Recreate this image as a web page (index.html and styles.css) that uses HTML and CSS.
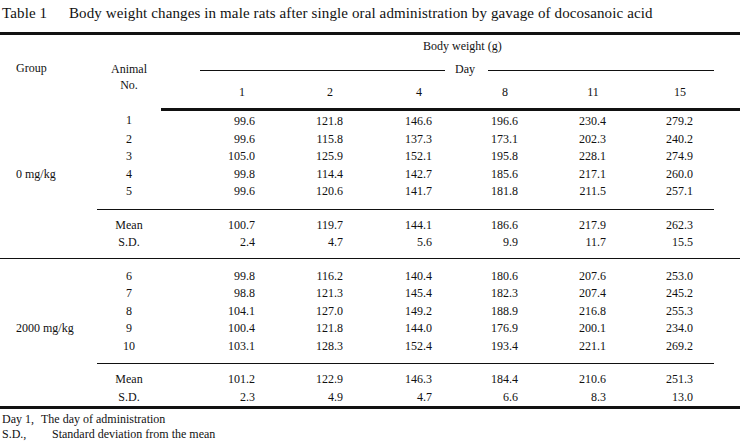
FILE: index.html
```html
<!DOCTYPE html>
<html>
<head>
<meta charset="utf-8">
<link rel="stylesheet" href="styles.css">
</head>
<body>
<div class="caption"><span class="cap-label">Table 1</span><span class="cap-text">Body weight changes in male rats after single oral administration by gavage of docosanoic acid</span></div>
<table class="bw">
<colgroup>
<col class="c-group"><col class="c-animal"><col class="c-d1"><col class="c-d2"><col class="c-d3"><col class="c-d4"><col class="c-d5"><col class="c-d6"><col class="c-pad">
</colgroup>
<thead>
<tr class="h1"><th rowspan="3" class="grp-h">Group</th><th rowspan="3" class="ani-h">Animal<br>No.</th><th colspan="6" class="bw-h">Body weight (g)</th><th></th></tr>
<tr class="h2"><th colspan="6" class="day-h"><div class="day-line"><span class="rule-l"></span><span class="day-t">Day</span><span class="rule-r"></span></div></th><th></th></tr>
<tr class="h3"><th class="dn"><span>1</span></th><th class="dn"><span>2</span></th><th class="dn"><span>4</span></th><th class="dn"><span>8</span></th><th class="dn"><span>11</span></th><th class="dn"><span>15</span></th><th></th></tr>
</thead>
<tbody class="grp">
<tr class="first"><td></td><td class="an">1</td><td>99.6</td><td>121.8</td><td>146.6</td><td>196.6</td><td>230.4</td><td>279.2</td><td></td></tr>
<tr><td></td><td class="an">2</td><td>99.6</td><td>115.8</td><td>137.3</td><td>173.1</td><td>202.3</td><td>240.2</td><td></td></tr>
<tr><td></td><td class="an">3</td><td>105.0</td><td>125.9</td><td>152.1</td><td>195.8</td><td>228.1</td><td>274.9</td><td></td></tr>
<tr><td class="gl">0 mg/kg</td><td class="an">4</td><td>99.8</td><td>114.4</td><td>142.7</td><td>185.6</td><td>217.1</td><td>260.0</td><td></td></tr>
<tr class="last"><td></td><td class="an">5</td><td>99.6</td><td>120.6</td><td>141.7</td><td>181.8</td><td>211.5</td><td>257.1</td><td></td></tr>
<tr class="mean"><td></td><td class="an">Mean</td><td>100.7</td><td>119.7</td><td>144.1</td><td>186.6</td><td>217.9</td><td>262.3</td><td class="nb"></td></tr>
<tr class="sd"><td></td><td class="an">S.D.</td><td>2.4</td><td>4.7</td><td>5.6</td><td>9.9</td><td>11.7</td><td>15.5</td><td></td></tr>
</tbody>
<tbody class="grp grp2">
<tr class="first"><td></td><td class="an">6</td><td>99.8</td><td>116.2</td><td>140.4</td><td>180.6</td><td>207.6</td><td>253.0</td><td></td></tr>
<tr><td></td><td class="an">7</td><td>98.8</td><td>121.3</td><td>145.4</td><td>182.3</td><td>207.4</td><td>245.2</td><td></td></tr>
<tr><td></td><td class="an">8</td><td>104.1</td><td>127.0</td><td>149.2</td><td>188.9</td><td>216.8</td><td>255.3</td><td></td></tr>
<tr><td class="gl">2000 mg/kg</td><td class="an">9</td><td>100.4</td><td>121.8</td><td>144.0</td><td>176.9</td><td>200.1</td><td>234.0</td><td></td></tr>
<tr class="last"><td></td><td class="an">10</td><td>103.1</td><td>128.3</td><td>152.4</td><td>193.4</td><td>221.1</td><td>269.2</td><td></td></tr>
<tr class="mean"><td></td><td class="an">Mean</td><td>101.2</td><td>122.9</td><td>146.3</td><td>184.4</td><td>210.6</td><td>251.3</td><td class="nb"></td></tr>
<tr class="sd"><td></td><td class="an">S.D.</td><td>2.3</td><td>4.9</td><td>4.7</td><td>6.6</td><td>8.3</td><td>13.0</td><td></td></tr>
</tbody>
</table>
<div class="notes">
<div class="note"><span class="n1">Day 1,</span><span>The day of administration</span></div>
<div class="note"><span class="n2">S.D.,</span><span>Standard deviation from the mean</span></div>
</div>
</body>
</html>
```
FILE: styles.css
```css
html, body {
  margin: 0;
  padding: 0;
  background: #fff;
}
body {
  width: 740px;
  font-family: "Liberation Serif", "DejaVu Serif", serif;
  font-size: 12px;
  color: #111;
}
.caption {
  display: flex;
  height: 26px;
  align-items: center;
  font-size: 15px;
  letter-spacing: 0.12px;
  padding-left: 2px;
  padding-bottom: 6px;
}
.cap-label {
  width: 67px;
}
.bw {
  width: 740px;
  border-collapse: collapse;
  table-layout: fixed;
  border-top: 3px solid #111;
  border-bottom: 3px solid #111;
}
.c-group { width: 97px; }
.c-animal { width: 64px; }
.c-d1 { width: 115px; }
.c-d2 { width: 88px; }
.c-d3 { width: 89px; }
.c-d4 { width: 86px; }
.c-d5 { width: 88px; }
.c-d6 { width: 87px; }
.c-pad { width: 26px; }
th, td {
  padding: 0;
  font-weight: 400;
  line-height: 17.5px;
  white-space: nowrap;
}
thead tr.h3 th {
  border-bottom: 3px solid #111;
}
.grp-h {
  text-align: left;
  padding-left: 16px;
  vertical-align: top;
  padding-top: 25px;
}
.ani-h {
  text-align: center;
  line-height: 16px;
  vertical-align: top;
  padding-top: 26px;
}
.bw-h {
  text-align: left;
  padding-left: 262px;
  padding-top: 3px;
  height: 18px;
}
.day-line {
  display: flex;
  align-items: center;
  height: 28px;
  padding-left: 39px;
}
.rule-l {
  width: 245px;
  border-top: 1px solid #111;
}
.rule-r {
  flex: 1;
  border-top: 1px solid #111;
}
.day-t {
  padding: 0 13px 0 10px;
}
th.dn {
  text-align: right;
  padding-right: 21px;
  height: 24px;
  vertical-align: top;
}
th.dn span {
  display: inline-block;
  width: 26px;
  text-align: center;
}
td {
  text-align: right;
  padding-right: 21px;
}
td.an {
  text-align: center;
  padding-right: 0;
}
td.gl {
  text-align: left;
  padding-left: 16px;
  padding-right: 0;
}
tr.first td {
  padding-top: 2px;
}
tr.last td {
  padding-bottom: 8px;
}
tr.mean td {
  border-top: 1px solid #111;
  padding-top: 7px;
}
tr.mean td:first-child,
tr.mean td.nb {
  border-top: none;
}
tr.sd td {
  padding-bottom: 6px;
}
.grp2 tr.first td {
  border-top: 1px solid #111;
  padding-top: 9px;
}
.grp2 tr.sd td {
  padding-bottom: 0;
}
.notes {
  padding-left: 2px;
  padding-top: 3px;
}
.note {
  display: flex;
  line-height: 15px;
}
.n1 { width: 39px; }
.n2 { width: 50px; }
```
